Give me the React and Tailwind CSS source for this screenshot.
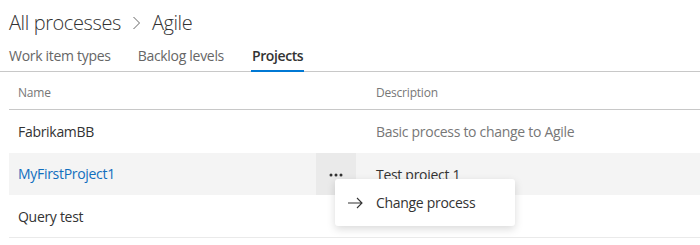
import React from "react";

export default function App() {
  return (
    <div className="w-[700px] h-[245px] bg-white overflow-hidden relative font-['Open_Sans',_'Noto_Sans',_sans-serif] text-[#333] tracking-[-0.3px]">
      <div className="pl-[9px] pt-[6px] h-[40px] flex items-center gap-[10px] text-[20px] font-light text-[#333] leading-none tracking-[-0.4px]">
        <span>All processes</span>
        <svg width="9" height="14" viewBox="0 0 9 14" className="mx-[1px]">
          <path d="M1.5 1 L7.5 7 L1.5 13" fill="none" stroke="#666" strokeWidth="1" />
        </svg>
        <span>Agile</span>
      </div>
      <div className="flex h-[32px] border-b border-[#c8c8c8] pl-[9px] gap-[27px] text-[14px]">
        <div className="flex items-center text-[#666]">Work item types</div>
        <div className="flex items-center text-[#666]">Backlog levels</div>
        <div className="relative flex items-center text-[#333] font-semibold tracking-[-0.4px] px-[1px]">
          Projects
          <div className="absolute left-0 right-0 -bottom-[1px] h-[2px] bg-[#0078d4]" />
        </div>
      </div>
      <div className="ml-[9px]">
        <div className="flex h-[38px] items-center pt-[5px] border-b border-[#c8c8c8] text-[12px] text-[#777] tracking-[-0.2px]">
          <div className="w-[347px] pl-[9px]">Name</div>
          <div className="pl-[20px]">Description</div>
        </div>
        <div className="flex h-[43px] items-center text-[14px]">
          <div className="w-[347px] pl-[9px] text-[#333]">FabrikamBB</div>
          <div className="pl-[20px] text-[#777]">Basic process to change to Agile</div>
        </div>
        <div className="flex h-[42px] items-stretch text-[14px] bg-[#f4f4f4]">
          <div className="w-[307px] pl-[9px] pb-[2px] flex items-center text-[#106ebe]">MyFirstProject1</div>
          <div className="w-[40px] bg-[#eaeaea] flex items-center justify-center">
            <svg width="14" height="4" viewBox="0 0 14 4" className="mt-[2px]">
              <circle cx="2" cy="2" r="1.5" fill="#333" />
              <circle cx="7" cy="2" r="1.5" fill="#333" />
              <circle cx="12" cy="2" r="1.5" fill="#333" />
            </svg>
          </div>
          <div className="pl-[20px] flex items-center text-[#333]">Test project 1</div>
        </div>
        <div className="flex h-[43px] items-center text-[14px] border-b border-[#eaeaea]">
          <div className="w-[347px] pl-[9px] text-[#333]">Query test</div>
          <div className="pl-[20px] text-[#777]"></div>
        </div>
      </div>
      <div className="absolute left-[335px] top-[179px] w-[180px] h-[47px] bg-white rounded-[3px] shadow-[0_3px_8px_rgba(0,0,0,0.15)] flex items-center pl-[12px] gap-[13px] text-[14px] text-[#333]">
        <svg width="16" height="12" viewBox="0 0 16 12">
          <path d="M1 6 H15 M10 1 L15 6 L10 11" fill="none" stroke="#333" strokeWidth="1.1" />
        </svg>
        <span>Change process</span>
      </div>
    </div>
  );
}
